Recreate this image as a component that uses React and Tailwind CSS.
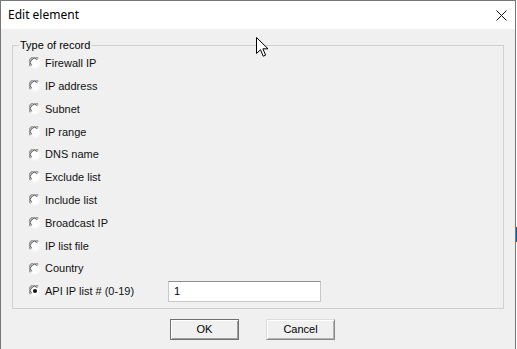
import React from 'react';

const options = [
  'Firewall IP',
  'IP address',
  'Subnet',
  'IP range',
  'DNS name',
  'Exclude list',
  'Include list',
  'Broadcast IP',
  'IP list file',
  'Country',
  'API IP list # (0-19)',
];

function Radio({ checked }) {
  return (
    <svg width="12" height="12" viewBox="0 0 12 12" className="shrink-0">
      <circle cx="6" cy="6" r="5.5" fill="#ffffff" />
      <path d="M1.6 9.4 A5 5 0 0 1 9.4 1.6" fill="none" stroke="#8e8e8e" strokeWidth="1.2" />
      <path d="M2.6 8.4 A3.8 3.8 0 0 1 8.4 2.6" fill="none" stroke="#4a4a4a" strokeWidth="1" />
      <path d="M9.4 1.6 A5 5 0 0 1 1.6 9.4" fill="none" stroke="#f4f4f4" strokeWidth="1.1" />
      {checked && <circle cx="6" cy="6" r="2" fill="#111111" />}
    </svg>
  );
}

function Cursor() {
  return (
    <svg width="13" height="21" viewBox="0 0 13 21" className="absolute left-[256px] top-[37px]">
      <path
        d="M0.5 0.5 L0.5 16.5 L4.5 12.7 L7.2 19.2 L9.6 18.2 L6.9 11.8 L12 11.8 Z"
        fill="#ffffff"
        stroke="#000000"
        strokeWidth="1"
        strokeLinejoin="miter"
      />
    </svg>
  );
}

export default function App() {
  return (
    <div className="relative flex w-[517px] h-[349px] overflow-hidden bg-white">
      {/* DIALOG WINDOW */}
      <div className="flex flex-col w-[516px] h-full border-l border-t border-r border-[#777777] bg-[#f0f0f0]">
        {/* TITLE BAR */}
        <div className="flex items-center justify-between h-[28px] bg-white pl-[7px] pr-[8px] shrink-0">
          <span className="text-[12px] text-black" style={{ fontFamily: '"Noto Sans", "Liberation Sans", sans-serif' }}>
            Edit element
          </span>
          <svg width="11" height="11" viewBox="0 0 11 11">
            <path d="M0.5 0.5 L10.5 10.5 M10.5 0.5 L0.5 10.5" stroke="#111111" strokeWidth="1" />
          </svg>
        </div>

        {/* BODY */}
        <div className="flex-1 flex flex-col px-[11px] pt-[10px]" style={{ fontFamily: '"Liberation Sans", Arial, sans-serif' }}>
          <fieldset className="border border-[#d0d0d0] pl-[6px] pb-[5px] h-[270px]">
            <legend className="px-[1px] text-[11px] leading-[13px] text-black">Type of record</legend>
            <div className="flex flex-col pl-[10px]">
              {options.map((label, i) => {
                const last = i === options.length - 1;
                return (
                  <div key={label} className="flex items-center h-[22.8px]">
                    <div className="flex items-center gap-[4px] w-[139px]">
                      <Radio checked={last} />
                      <span className="text-[11px] text-[#101010]">{label}</span>
                    </div>
                    {last && (
                      <div className="flex items-center w-[153px] h-[21px] bg-white border border-[#c8c8c8] border-t-[#8f8f8f] pl-[5px] text-[11px] text-black">
                        1
                      </div>
                    )}
                  </div>
                );
              })}
            </div>
          </fieldset>

          {/* BUTTONS */}
          <div className="flex gap-[27px] pl-[158px] mt-[10px]">
            <button className="w-[69px] h-[21px] border border-[#6f6f6f] bg-[#f0f0f0] text-[11px] text-black shadow-[inset_1px_1px_0_#ffffff,inset_-1px_-1px_0_#a0a0a0]">
              OK
            </button>
            <button className="w-[69px] h-[21px] border border-[#dcdcdc] border-r-[#8a8a8a] border-b-[#8a8a8a] bg-[#f0f0f0] text-[11px] text-black shadow-[inset_1px_1px_0_#ffffff,inset_-1px_-1px_0_#b4b4b4]">
              Cancel
            </button>
          </div>
        </div>
      </div>

      {/* desktop strip outside window */}
      <div className="flex flex-col w-[1px] h-full bg-white">
        <div className="mt-[227px] h-[15px] bg-[#0063b1]" />
      </div>

      <Cursor />
    </div>
  );
}
